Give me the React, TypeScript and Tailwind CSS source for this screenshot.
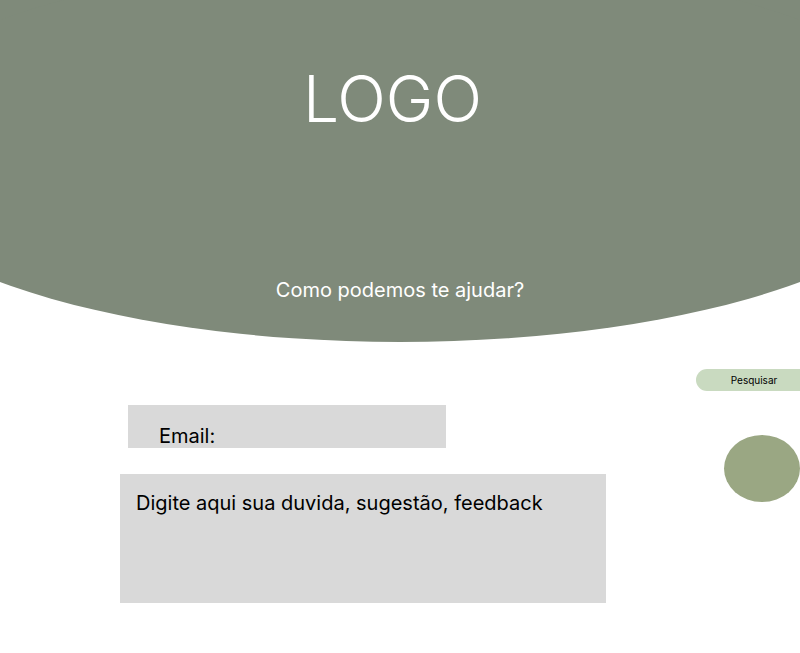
export default function App() {
  return (
    <div className="w-full h-[653px] bg-white overflow-hidden font-['Inter',sans-serif]">
      {/* header with the big ellipse */}
      <header className="relative h-[342px] overflow-hidden">
        <svg
          className="absolute inset-0"
          width="800"
          height="342"
          viewBox="0 0 800 342"
        >
          <rect x="0" y="0" width="800" height="151" fill="#7F8A7A" />
          <ellipse cx="400" cy="151" rx="550" ry="191" fill="#7F8A7A" />
        </svg>
        <div className="relative flex flex-col items-center pt-[67px]">
          <h1 className="text-[64px] leading-[64px] font-light text-white pr-[15px]">
            LOGO
          </h1>
          <p className="mt-[149px] text-[20px] leading-[20px] text-white">
            Como podemos te ajudar?
          </p>
        </div>
      </header>

      <main className="flex">
        <div className="flex-1 pt-[63px]">
          <div className="ml-[128px] w-[318px] h-[43px] bg-[#D9D9D9] pl-[31px] pt-[20px]">
            <span className="text-[20px] leading-[20px] text-black">Email:</span>
          </div>
          <div className="ml-[120px] mt-[26px] w-[486px] h-[129px] bg-[#D9D9D9] pl-[16px] pt-[19px]">
            <p className="text-[20px] leading-[20px] text-black">
              Digite aqui sua duvida, sugestão, feedback
            </p>
          </div>
        </div>
        <div className="w-[104px] pt-[27px] flex flex-col">
          <button className="h-[22px] w-full rounded-l-full bg-[#C9DAC0] text-[10px] leading-[22px] text-black pl-[12px]">
            Pesquisar
          </button>
          <div className="ml-[28px] mt-[44px] w-[76px] h-[67px] rounded-[50%] bg-[#9AA783]" />
        </div>
      </main>
    </div>
  );
}
